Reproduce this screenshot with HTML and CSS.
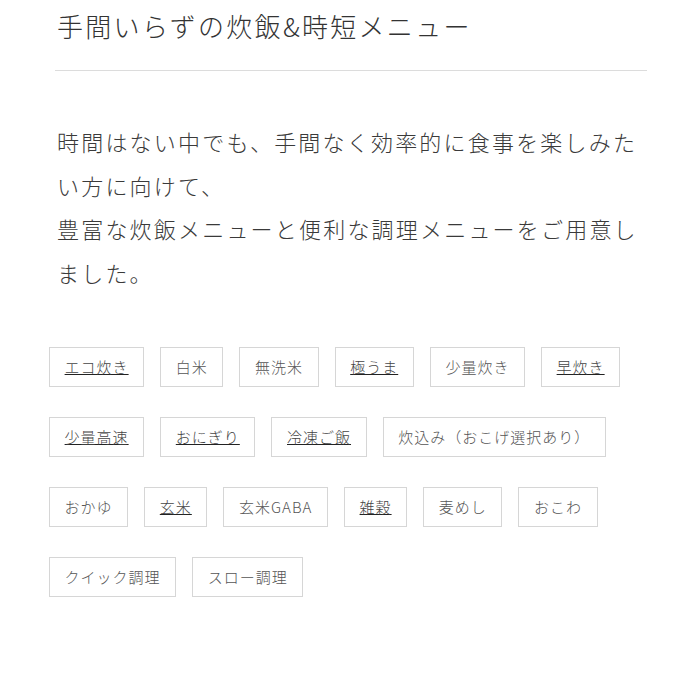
FILE: index.html
```html
<!DOCTYPE html>
<html lang="ja">
<head>
<meta charset="utf-8">
<title>手間いらずの炊飯&amp;時短メニュー</title>
<link rel="stylesheet" href="styles.css">
</head>
<body>
<section class="page">
  <h1 class="title">手間いらずの炊飯&amp;時短メニュー</h1>
  <p class="lead">時間はない中でも、手間なく効率的に食事を楽しみたい方に向けて、<br>豊富な炊飯メニューと便利な調理メニューをご用意しました。</p>
  <ul class="tags">
    <li><a class="tag link" href="#">エコ炊き</a></li>
    <li><span class="tag">白米</span></li>
    <li><span class="tag">無洗米</span></li>
    <li><a class="tag link" href="#">極うま</a></li>
    <li><span class="tag">少量炊き</span></li>
    <li><a class="tag link" href="#">早炊き</a></li>
    <li><a class="tag link" href="#">少量高速</a></li>
    <li><a class="tag link" href="#">おにぎり</a></li>
    <li><a class="tag link" href="#">冷凍ご飯</a></li>
    <li><span class="tag">炊込み（おこげ選択あり）</span></li>
    <li><span class="tag">おかゆ</span></li>
    <li><a class="tag link" href="#">玄米</a></li>
    <li><span class="tag">玄米GABA</span></li>
    <li><a class="tag link" href="#">雑穀</a></li>
    <li><span class="tag">麦めし</span></li>
    <li><span class="tag">おこわ</span></li>
    <li><span class="tag">クイック調理</span></li>
    <li><span class="tag">スロー調理</span></li>
  </ul>
</section>
</body>
</html>
```

FILE: styles.css
```css
* { box-sizing: border-box; }
html, body { margin: 0; padding: 0; background: #fff; }
body {
  font-family: "Noto Sans CJK JP", "Noto Sans", sans-serif;
  font-weight: 300;
  color: #333;
}
.page {
  width: 590px;
  margin-left: 57px;
  padding-top: 6px;
}
.title {
  margin: 0 0 0 -2px;
  padding: 0 0 24px 2px;
  font-size: 26px;
  line-height: 40px;
  font-weight: 300;
  letter-spacing: 2.3px;
  color: #333;
  border-bottom: 1px solid #dcdcdc;
}
.lead {
  margin: 49px 0 0;
  font-size: 22px;
  line-height: 43.5px;
  letter-spacing: 2.2px;
  color: #3a3a3a;
}
.tags {
  list-style: none;
  margin: 53px 0 0 -8px;
  padding: 0;
  display: flex;
  flex-wrap: wrap;
  gap: 30px 16px;
}
.tags li { display: block; }
.tag {
  display: block;
  height: 40px;
  padding: 0 14.6px;
  border: 1px solid #d6d6d6;
  font-size: 15px;
  line-height: 38px;
  letter-spacing: 1px;
  color: #555;
  white-space: nowrap;
}
.tag.link {
  color: #444;
  text-decoration: underline;
  text-decoration-color: #222;
}
```
